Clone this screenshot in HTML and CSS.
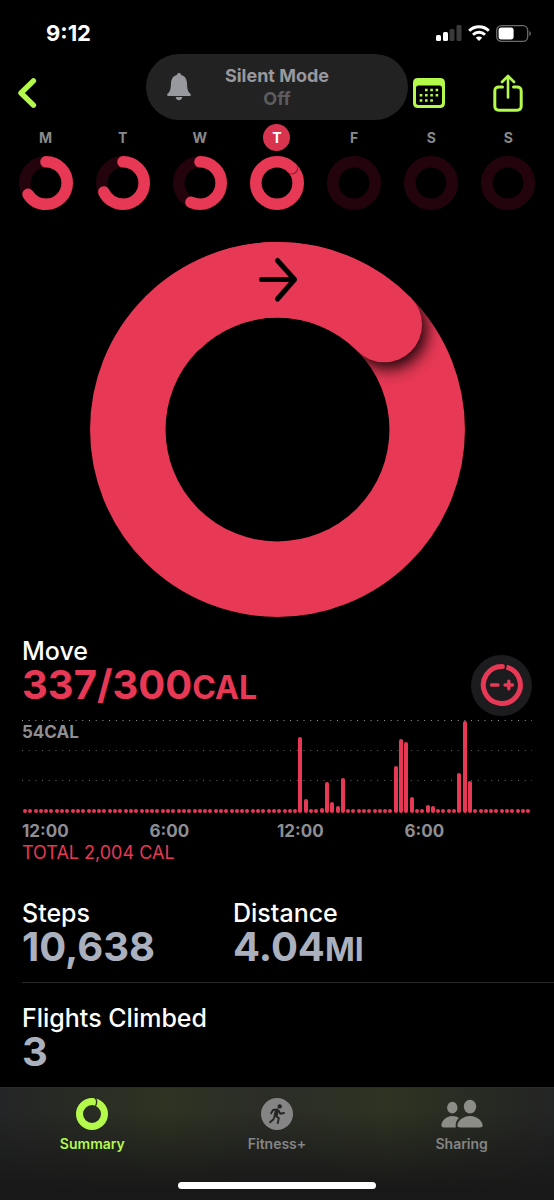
FILE: index.html
```html
<!DOCTYPE html>
<html lang="en">
<head>
    <meta charset="UTF-8">
    <meta name="viewport" content="width=device-width, initial-scale=1.0">
    <title>Summary</title>
    <link rel="stylesheet" href="styles.css">
</head>
<body>

    <div class="status-bar">
        <span class="clock">9:12</span>
        <div class="status-icons">
            <svg width="26" height="16" viewBox="0 0 26 16" fill="#fff">
                <rect x="0" y="10" width="5" height="6" rx="1.5"/>
                <rect x="7" y="7" width="5" height="9" rx="1.5"/>
                <rect x="13.5" y="4" width="5" height="12" rx="1.5" fill="#3a3a3a"/>
                <rect x="20.5" y="0" width="5" height="16" rx="1.5" fill="#3a3a3a"/>
            </svg>
            <svg width="22" height="16" viewBox="0 0 22 16" fill="none" stroke="#fff" stroke-width="3">
                <path d="M1.2 5.8a14 14 0 0 1 19.6 0"/>
                <path d="M5 9.7a8.6 8.6 0 0 1 12 0"/>
                <path d="M11 16l-3.2-3.3a4.6 4.6 0 0 1 6.4 0z" fill="#fff" stroke="none"/>
            </svg>
            <svg width="36" height="17" viewBox="0 0 36 17">
                <rect x="0.7" y="0.7" width="31" height="15.6" rx="4.6" fill="none" stroke="#6b6b6b" stroke-width="1.3"/>
                <rect x="2.6" y="2.6" width="15" height="11.8" rx="2.6" fill="#fff"/>
                <path d="M33.4 6v5c2-.8 2-4.2 0-5z" fill="#6b6b6b"/>
            </svg>
        </div>
    </div>

    <header class="toolbar">
        <button type="button" class="icon-btn" aria-label="Back">
            <svg width="20" height="32" viewBox="0 0 20 32" fill="none" stroke="#b4fa4b" stroke-width="5.4" stroke-linecap="round" stroke-linejoin="round">
                <path d="M15.4 3.8L3 16l12.4 12.2"/>
            </svg>
        </button>

        <div class="toast" role="status">
            <svg width="26" height="30" viewBox="0 0 26 30" fill="#98989f">
                <path d="M13 1c1.4 0 2 .9 2.1 2 3.7.9 5.7 3.9 5.9 8 .2 5.4.5 8 2.9 10.3.8.8 1 1.2 1 1.7 0 .6-.5.9-1.2.9H2.3c-.7 0-1.2-.3-1.2-.9 0-.5.2-.9 1-1.7C4.5 19 4.8 16.4 5 11c.2-4.1 2.2-7.1 5.9-8C11 1.9 11.6 1 13 1z"/>
                <path d="M9.6 25h6.8c-.3 2-1.6 3.2-3.4 3.2S9.9 27 9.6 25z"/>
            </svg>
            <div class="toast-text">
                <span>Silent Mode</span>
                <span class="toast-state">Off</span>
            </div>
        </div>

        <div class="toolbar-actions">
            <button type="button" class="icon-btn" aria-label="Calendar">
                <svg width="34" height="32" viewBox="0 0 34 32">
                    <path fill="#b4fa4b" fill-rule="evenodd" d="M6 1h22c3.3 0 5 1.7 5 5v20c0 3.3-1.7 5-5 5H6c-3.3 0-5-1.7-5-5V6c0-3.3 1.7-5 5-5zM4 11v14.5C4 27.2 5 28 6.5 28h21c1.5 0 2.5-.8 2.5-2.5V11c0-1.6-.9-2.5-2.5-2.5h-21C4.9 8.5 4 9.4 4 11z"/>
                    <path stroke="#b4fa4b" stroke-width="2.6" stroke-dasharray="2.6 2.7" d="M13 13h13.5M7.7 18.3h18.8M7.7 23.5h13.4"/>
                </svg>
            </button>
            <button type="button" class="icon-btn" aria-label="Share">
                <svg width="30" height="38" viewBox="0 0 30 38" fill="none" stroke="#b4fa4b" stroke-width="3" stroke-linecap="round" stroke-linejoin="round">
                    <path d="M9.5 13H6c-2.800 0-4.2 1.4-4.2 4.2V32c0 2.8 1.4 4.2 4.2 4.2h18c2.8 0 4.2-1.4 4.2-4.2V17.2c0-2.8-1.4-4.2-4.2-4.2h-3.5"/>
                    <path stroke-width="2.6" d="M15 23.5V2.5M9 8l6-6 6 6"/>
                </svg>
            </button>
        </div>
    </header>

    <section class="week" id="week" aria-label="Week"></section>

    <main>
        <svg class="move-ring" viewBox="0 0 375 375" role="img" aria-label="Move ring">
            <defs>
                <filter id="capBlur" x="-100%" y="-100%" width="300%" height="300%">
                    <feGaussianBlur stdDeviation="8"/>
                </filter>
                <mask id="ringMask" maskUnits="userSpaceOnUse" x="0" y="0" width="375" height="375">
                    <circle cx="187.5" cy="187.5" r="149.7" fill="none" stroke="#fff" stroke-width="75.5"/>
                </mask>
            </defs>
            <circle cx="187.5" cy="187.5" r="149.7" fill="none" stroke="#e73855" stroke-width="75.5"/>
            <g mask="url(#ringMask)">
                <circle cx="298" cy="88" r="39" fill="#000" opacity="0.9" filter="url(#capBlur)"/>
            </g>
            <path d="M81.7 81.7A149.7 149.7 0 0 1 294.3 82.6" fill="none" stroke="#e73855" stroke-width="75.5"/>
            <circle cx="294.3" cy="82.6" r="37.75" fill="#e73855"/>
            <path d="M171.5 37.5h33M187.5 18.5l17 19-17 19.5" fill="none" stroke="#000" stroke-width="5" stroke-linecap="round" stroke-linejoin="round"/>
        </svg>

        <section class="move">
            <div class="move-head">
                <div>
                    <h2>Move</h2>
                    <p class="value move-value">337/300<span class="unit">CAL</span></p>
                </div>
                <button type="button" class="goal-btn" aria-label="Change goal">
                    <svg width="44" height="44" viewBox="0 0 44 44" fill="none" stroke="#e73855" stroke-linecap="round">
                        <path stroke-width="5" stroke-linecap="butt" d="M26.5 4.1A18.5 18.5 0 1 1 22 3.5"/>
                        <circle cx="22.3" cy="3.5" r="2.5" fill="#e73855" stroke="none"/>
                        <path stroke-width="3.4" d="M11.5 22h6.5M25 22h7.5M28.8 18.2v7.6"/>
                    </svg>
                </button>
            </div>

            <div class="chart">
                <span class="chart-max">54CAL</span>
                <div class="bars" id="bars"></div>
            </div>
            <div class="hours">
                <span>12:00</span>
                <span>6:00</span>
                <span>12:00</span>
                <span>6:00</span>
            </div>
            <p class="total">TOTAL 2,004 CAL</p>
        </section>

        <section class="stats">
            <div class="stat-row">
                <div>
                    <h2>Steps</h2>
                    <p class="value">10,638</p>
                </div>
                <div>
                    <h2>Distance</h2>
                    <p class="value">4.04<span class="unit">MI</span></p>
                </div>
            </div>
            <div class="stat-row">
                <div>
                    <h2>Flights Climbed</h2>
                    <p class="value">3</p>
                </div>
            </div>
        </section>
    </main>

    <nav class="tab-bar">
        <div class="tabs">
            <a href="#" class="tab active">
                <svg width="32" height="32" viewBox="0 0 32 32" fill="none">
                    <circle cx="16" cy="16" r="12.5" stroke="#b4fa4b" stroke-width="7"/>
                    <path d="M18.6-.5c2.4 2 2.4 5.5 1 8.5" stroke="#2b2f22" stroke-width="1.3"/>
                </svg>
                <span>Summary</span>
            </a>
            <a href="#" class="tab">
                <svg width="32" height="32" viewBox="0 0 32 32">
                    <circle cx="16" cy="16" r="16" fill="#858585"/>
                    <circle cx="18.7" cy="8.4" r="2.2" fill="#262724"/>
                    <path d="M16.3 11.5l-2.3 6 3.8 2.6-1 5M13.5 18.5l-1.2 3-3.3 2.8M16 11.5l-4 .5-1.8 3.3M17.5 12.5l1.8 3.2 3.7-.7" fill="none" stroke="#262724" stroke-width="1.9" stroke-linecap="round" stroke-linejoin="round"/>
                    <path d="M14.3 11l4 1-1.8 6.5-4-1z" fill="#262724"/>
                </svg>
                <span>Fitness+</span>
            </a>
            <a href="#" class="tab">
                <svg width="42" height="32" viewBox="0 0 42 32" fill="#8b8d86">
                    <ellipse cx="11.3" cy="9.7" rx="5.2" ry="5.9"/>
                    <path d="M11.3 18c2.8 0 5 .7 6.7 2-2.6 2.3-3.8 5-3.2 9.5H3c-1.6 0-2.6-.7-2.6-2C.4 23.5 4.8 18 11.3 18z"/>
                    <ellipse cx="29" cy="8.6" rx="6.2" ry="6.8"/>
                    <path d="M29 18c7.5 0 12.6 5.4 12.6 9.3 0 1.5-1 2.2-3 2.2H19.4c-2 0-3-.7-3-2.2C16.4 23.4 21.5 18 29 18z"/>
                </svg>
                <span>Sharing</span>
            </a>
        </div>
        <div class="home-indicator"></div>
    </nav>

    <script>
        // progress of each day, 1 = goal reached
        const days = [
            { name: 'M', progress: 0.66 },
            { name: 'T', progress: 0.68 },
            { name: 'W', progress: 0.57 },
            { name: 'T', progress: 1.12, today: true },
            { name: 'F', progress: 0 },
            { name: 'S', progress: 0 },
            { name: 'S', progress: 0 }
        ];

        document.getElementById('week').innerHTML = days.map((day) => {
            let ring = '<circle class="track" cx="27" cy="27" r="21.2"/>';
            if (day.progress > 0) {
                const part = Math.min(day.progress, 1) * 100;
                ring += `<circle class="arc" cx="27" cy="27" r="21.2" pathLength="100" stroke-dasharray="${part} 100" transform="rotate(-90 27 27)"/>`;
            }
            if (day.progress > 1) {
                // second lap, drawn over a dark edge
                ring += '<circle cx="42.4" cy="12.9" r="5.6" fill="#8d2236"/>';
                ring += '<circle cx="41.5" cy="11.8" r="5.6" fill="#e73855"/>';
            }
            return `<div class="day${day.today ? ' today' : ''}">
                <span class="day-name">${day.name}</span>
                <svg width="54" height="54" viewBox="0 0 54 54">${ring}</svg>
            </div>`;
        }).join('');

        // one bar for each 15 minutes of the day, idle slots stay at the minimum
        const slots = 96;
        const active = {
            52: 76, 53: 14, 56: 5, 57: 31, 58: 11, 59: 7, 60: 35,
            70: 47, 71: 74, 72: 71, 73: 16, 76: 8, 77: 7,
            82: 40, 83: 92, 84: 32
        };
        const bars = document.getElementById('bars');
        for (let i = 0; i < slots; i++) {
            const bar = document.createElement('i');
            bar.style.height = `${active[i] || 4}px`;
            bars.appendChild(bar);
        }
    </script>

</body>
</html>
```
FILE: styles.css
```css
* {
    margin: 0;
    padding: 0;
    box-sizing: border-box;
}

body {
    font-family: Inter, "Liberation Sans", sans-serif;
    background-color: #000;
    color: #fff;
    display: flex;
    flex-direction: column;
    min-height: 100vh;
    overflow-x: hidden;
}

button {
    background: none;
    border: none;
    cursor: pointer;
}

svg {
    display: block;
}

/* status bar */
.status-bar {
    display: flex;
    justify-content: space-between;
    align-items: center;
    height: 54px;
    padding: 12px 22px 0 46px;
}

.clock {
    font-size: 22px;
    font-weight: 700;
}

.status-icons {
    display: flex;
    align-items: center;
    gap: 6px;
}

/* toolbar */
.toolbar {
    position: relative;
    display: flex;
    justify-content: space-between;
    align-items: center;
    height: 70px;
    padding: 8px 31px 0 18px;
}

.toolbar-actions {
    display: flex;
    align-items: center;
    gap: 47px;
}

.toast {
    position: absolute;
    top: 0;
    left: 50%;
    transform: translateX(-50%);
    display: flex;
    align-items: center;
    width: 262px;
    height: 66px;
    padding: 0 20px;
    border-radius: 33px;
    background-color: #222;
}

.toast-text {
    flex: 1;
    display: flex;
    flex-direction: column;
    margin-right: 26px;
    text-align: center;
    font-size: 18px;
    line-height: 23px;
    font-weight: 700;
    color: #98989f;
}

.toast-state {
    color: #5c5c60;
}

/* week rings */
.week {
    display: grid;
    grid-template-columns: repeat(7, 1fr);
    padding: 0 7px;
}

.day {
    display: flex;
    flex-direction: column;
    align-items: center;
    gap: 5px;
}

.day-name {
    width: 27px;
    height: 27px;
    border-radius: 50%;
    font-size: 14px;
    line-height: 27px;
    font-weight: 700;
    text-align: center;
    color: #8a8a8e;
}

.today .day-name {
    background-color: #d8344f;
    color: #fff;
}

.track,
.arc {
    fill: none;
    stroke-width: 11.6;
}

.track {
    stroke: #24040c;
}

.arc {
    stroke: #e73855;
    stroke-linecap: round;
}

.move-ring {
    width: 68%;
    max-width: 375px;
    margin: 32px auto 19px;
}

/* text blocks */
h2 {
    font-size: 25px;
    line-height: 30px;
    font-weight: 500;
}

.value {
    font-size: 40px;
    line-height: 38px;
    font-weight: 700;
    color: #abb0be;
}

.unit {
    font-size: 32px;
    line-height: 1;
}

.move-value {
    color: #e73855;
}

.move {
    padding: 0 22px;
}

.move-head {
    display: flex;
    justify-content: space-between;
    align-items: center;
    height: 68px;
}

.goal-btn {
    display: flex;
    justify-content: center;
    align-items: center;
    width: 61px;
    height: 61px;
    margin-top: 30px;
    border-radius: 50%;
    background-color: #1c1c1e;
}

/* chart */
.chart {
    position: relative;
    height: 93px;
    margin-top: 16px;
    background-image:
        linear-gradient(90deg, #a0a0a0 1px, transparent 1px),
        linear-gradient(90deg, #6c6c6c 1px, transparent 1px),
        linear-gradient(90deg, #6c6c6c 1px, transparent 1px);
    background-size: calc(100% / 76) 1px;
    background-position: 0 0, 0 30px, 0 60px;
    background-repeat: repeat-x;
}

.chart-max {
    position: absolute;
    top: 1px;
    left: 0;
}

.chart-max,
.hours {
    font-size: 17px;
    line-height: 22px;
    font-weight: 700;
    color: #8e8e93;
}

.bars {
    display: flex;
    justify-content: space-between;
    align-items: flex-end;
    height: 100%;
    padding: 0 1px;
}

.bars i {
    width: 4px;
    border-radius: 2px;
    background-color: #e73855;
}

.hours {
    display: grid;
    grid-template-columns: repeat(4, 1fr);
    margin-top: 7px;
}

.total {
    font-size: 18px;
    line-height: 22px;
    color: #e73855;
}

/* steps, distance, flights */
.stats {
    margin-top: 34px;
    padding-left: 22px;
}

.stat-row {
    display: grid;
    grid-template-columns: 211px 1fr;
    padding-bottom: 16px;
}

.stat-row + .stat-row {
    grid-template-columns: 1fr;
    padding-top: 20px;
    border-top: 1px solid #2a2a2c;
}

/* bottom tabs */
.tab-bar {
    display: flex;
    flex-direction: column;
    justify-content: space-between;
    height: 113px;
    margin-top: auto;
    padding: 10px 0 11px;
    border-top: 1px solid #2c2d2b;
    background:
        linear-gradient(rgba(24, 24, 24, 0) 20%, #181818 90%),
        linear-gradient(90deg, #242526, #2e3322 30%, #2b2d27 48%, #2e3322 70%, #232424);
}

.tabs {
    display: grid;
    grid-template-columns: repeat(3, 1fr);
}

.tab {
    display: flex;
    flex-direction: column;
    align-items: center;
    gap: 5px;
    font-size: 14px;
    line-height: 18px;
    font-weight: 600;
    color: #858585;
    text-decoration: none;
}

.tab.active {
    color: #b4fa4b;
}

.home-indicator {
    width: 198px;
    height: 7px;
    margin: 0 auto;
    border-radius: 4px;
    background-color: #fff;
}
```
